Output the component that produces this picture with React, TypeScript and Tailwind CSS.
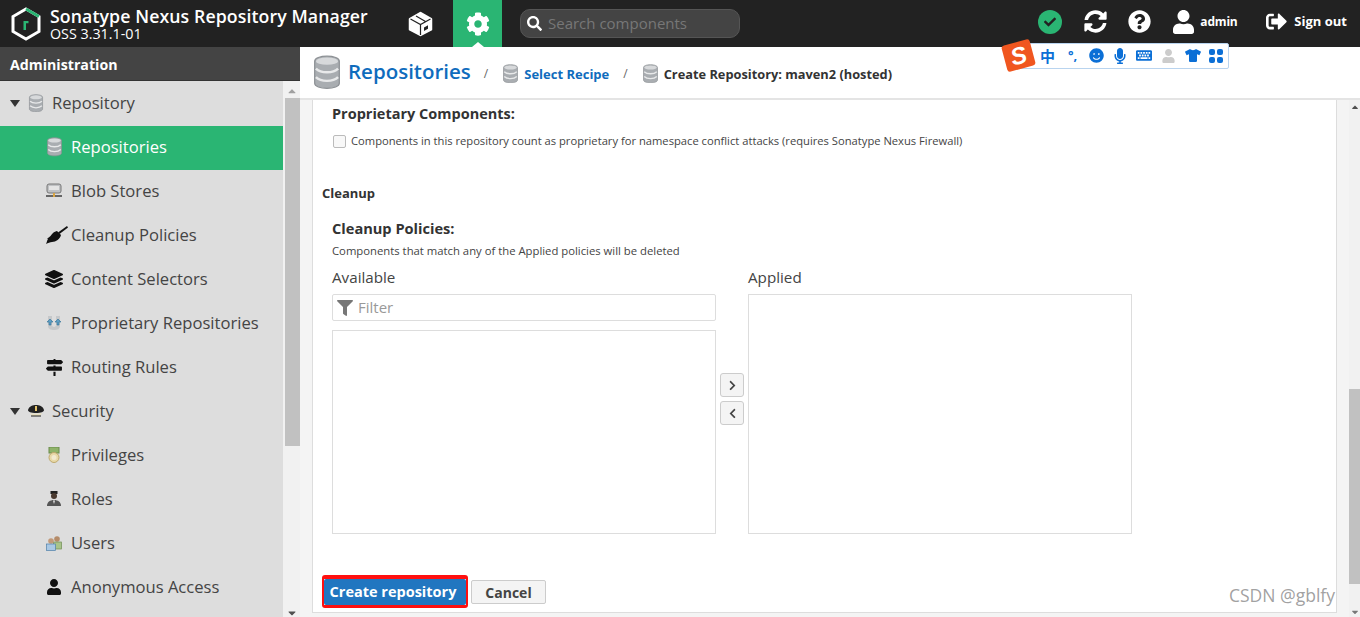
import React from "react";
import {
  FaCog, FaCheck, FaSyncAlt, FaQuestionCircle, FaUser, FaSignOutAlt, FaSearch, FaLayerGroup, FaFilter, FaChevronRight, FaChevronLeft, FaSmile, FaMicrophone, FaKeyboard, FaTshirt, FaMapSigns, FaCaretDown, FaCaretUp,
} from "react-icons/fa";

const Db = ({ s = 16 }: { s?: number }) => (
  <svg width={s} height={s * 1.15} viewBox="0 0 24 28" className="shrink-0">
    <path d="M2 5c0-2.5 4.500-4 10-4s10 1.500 10 4v18c0 2.500-4.500 4-10 4S2 25.500 2 23z" fill="#a9adb1" stroke="#8d9195" strokeWidth="1" />
    <ellipse cx="12" cy="5" rx="9" ry="3" fill="#d7d9db" />
    <path d="M3 11c2 2 5 3 9 3s7-1 9-3" fill="none" stroke="#e8e9ea" strokeWidth="2" />
    <path d="M3 18c2 2 5 3 9 3s7-1 9-3" fill="none" stroke="#e8e9ea" strokeWidth="2" />
  </svg>
);

const Logo = () => (
  <svg width="30" height="34" viewBox="0 0 30 34" className="shrink-0">
    <path d="M15 2 28 9.500v15L15 32 2 24.500v-15z" fill="none" stroke="#fff" strokeWidth="3" />
    <path d="M15 2 28 9.500" fill="none" stroke="#2ab573" strokeWidth="3" />
    <path d="M12.500 23v-9h5v2.200h-2.500V23z" fill="#2ab573" />
  </svg>
);

const Cube = () => (
  <svg width="25" height="26" viewBox="0 0 25 26" className="shrink-0">
    <path d="M12.500 2 23 8v10.500L12.500 24 2 18.500V8z" fill="#fff" stroke="#fff" strokeWidth="2.500" strokeLinejoin="round" />
    <path d="M2.500 8 12.500 13.500 22.500 8M12.500 13.500V24M8 5l9.500 5.500" fill="none" stroke="#222" strokeWidth="1.200" />
    <path d="M16 16.500l4-2.200v3.500l-4 2.200z" fill="#222" />
  </svg>
);

const Broom = () => (
  <svg width="23" height="20" viewBox="0 0 23 20" className="shrink-0 ml-[5px]"><path d="M22 1 13 7.500l1.500 1.500L23 2.500z" fill="#111" /><path d="M12 6l4 4c-1 4-5 7-9 7-2 0-4 1-6 2 1-2 1-4 2-5-1 0-1-1 0-1 2-1 3-3 5-5 1-1 3-2 4-2z" fill="#111" /></svg>
);
const Blob = () => (
  <svg width="16" height="16" viewBox="0 0 16 16" className="shrink-0"><rect x="1" y="1" width="14" height="9" rx="2" fill="#bfc1c3" stroke="#777" /><rect x="3" y="3" width="10" height="4" fill="#e4e4e4" /><rect x="0" y="12" width="16" height="2" fill="#666" /><rect x="7" y="10" width="2" height="4" fill="#d9a441" /></svg>
);
const Prop = () => (
  <svg width="16" height="16" viewBox="0 0 16 16" className="shrink-0"><path d="M2 1h4v9c0 1 1 2 2 2s2-1 2-2V1h4v10c0 3-3 4-6 4s-6-1-6-4z" fill="#c6c8ca" /><path d="M4 4 1 7h2v3h2V7h2zM12 4 9 7h2v3h2V7h2z" fill="#5f9fc4" stroke="#2f6f95" strokeWidth=".6" /></svg>
);
const Cap = () => (
  <svg width="16" height="12" viewBox="0 0 16 12" className="shrink-0"><path d="M0 5C1 1 5 0 8 0s7 1 8 5c0 2-3 3-8 3S0 7 0 5z" fill="#222" /><rect x="7" y="1" width="2" height="5" fill="#e3c36a" /><path d="M2 8c2 1 10 1 12 0l-2 3H4z" fill="#e7dfc0" /><path d="M3 11h10" stroke="#222" /></svg>
);
const Medal = () => (
  <svg width="12" height="16" viewBox="0 0 12 16" className="shrink-0"><rect x="1" y="0" width="10" height="6" fill="#8fb36a" stroke="#6b8c4a" /><circle cx="6" cy="10.500" r="5" fill="#e8d9a8" stroke="#bfa96d" /><circle cx="6" cy="10.500" r="2.500" fill="#f2ead0" /></svg>
);
const Role = () => (
  <svg width="14" height="16" viewBox="0 0 14 16" className="shrink-0"><rect x="3.500" y="0" width="7" height="3" fill="#222" /><circle cx="7" cy="5" r="3" fill="#4a3a30" /><path d="M0 15c0-4 3-6 7-6s7 2 7 6z" fill="#555" /><path d="M6 9.500h2L7 13z" fill="#eee" /></svg>
);
const Users = () => (
  <svg width="16" height="16" viewBox="0 0 16 16" className="shrink-0"><circle cx="11" cy="4" r="2.800" fill="#b58c6a" /><rect x="7.500" y="7" width="8" height="7" fill="#a8c48a" stroke="#6f8c55" strokeWidth=".7" /><circle cx="5" cy="6" r="2.800" fill="#c29a7a" /><rect x="0.500" y="9" width="9" height="6.500" fill="#a9c8e4" stroke="#4f7fa8" strokeWidth=".7" /></svg>
);

const Row = ({ icon, label, active, parent }: { icon: React.ReactNode; label: string; active?: boolean; parent?: boolean }) => (
  <div className={`h-11 flex items-center text-[16.600px] pb-[2px] ${active ? "bg-[#2ab573] text-white" : "text-[#444]"} ${parent ? "pl-[10px]" : "pl-[45px]"}`}>
    {parent && (
      <svg width="10" height="7" viewBox="0 0 10 7" className="mr-[8px] shrink-0"><path d="M0 0h10L5 7z" fill="#333" /></svg>
    )}
    <span className={`flex items-center justify-center ${parent ? "w-4 mr-[8px]" : "w-[18px] mr-2"}`}>{icon}</span>
    <span>{label}</span>
  </div>
);

export default function App() {
  return (
    <div className="relative w-[1360px] h-[617px] overflow-hidden bg-white flex flex-col font-['Open_Sans',sans-serif] text-[#333]">
      <header className="h-[47px] shrink-0 bg-[#222] flex items-center text-white">
        <div className="pl-[11px] flex items-center w-[397px]">
          <Logo />
          <div className="ml-[9px]">
            <div className="text-[17.700px] font-semibold leading-[18px] tracking-[0.1px] whitespace-nowrap">Sonatype Nexus Repository Manager</div>
            <div className="mt-[2px] text-[14.300px] leading-[14px]">OSS 3.31.1-01</div>
          </div>
        </div>
        <span className="ml-[11px]"><Cube /></span>
        <div className="relative ml-[20px] w-[49px] h-[47px] bg-[#2ab573] flex items-center justify-center">
          <FaCog className="w-6 h-6" />
          <div className="absolute bottom-0 left-[19px] w-0 h-0 border-x-[6px] border-x-transparent border-b-[5px] border-b-white" />
        </div>
        <div className="ml-[18px] w-[220px] h-[29px] rounded-[10px] bg-[#444] border border-[#555] flex items-center px-[6px] text-[15px] text-[#777]">
          <FaSearch className="w-[15px] h-[15px] text-white mr-[6px]" />
          Search components
        </div>
        <div className="ml-auto flex items-center pb-1">
          <div className="w-6 h-6 rounded-full bg-[#2ab573] flex items-center justify-center"><FaCheck className="w-3 h-3 text-[#222]" /></div>
          <FaSyncAlt className="w-[23px] h-[23px] ml-[22px]" />
          <FaQuestionCircle className="w-[23px] h-[23px] ml-[21px]" />
          <FaUser className="w-[23px] h-[24px] ml-[21px]" />
          <span className="ml-[5px] w-[39px] text-[12px] font-bold tracking-[-0.2px]">admin</span>
          <FaSignOutAlt className="w-[21px] h-[21px] ml-[27px]" />
          <span className="ml-[7px] mr-[13px] text-[13px] font-bold">Sign out</span>
        </div>
      </header>
      <div className="flex flex-1 min-h-0">
        <aside className="w-[300px] shrink-0 flex flex-col">
          <div className="h-[34px] shrink-0 bg-[#444] text-white text-[14.200px] font-bold flex items-center pl-[10px] pt-[2px] border-b border-[#333]">Administration</div>
          <div className="flex flex-1 min-h-0">
            <nav className="w-[283px] bg-[#ddd] overflow-hidden pt-px">
              <Row parent icon={<Db s={16} />} label="Repository" />
              <Row active icon={<Db s={17} />} label="Repositories" />
              <Row icon={<Blob />} label="Blob Stores" />
              <Row icon={<Broom />} label="Cleanup Policies" />
              <Row icon={<FaLayerGroup className="w-[18px] h-[18px] text-[#111]" />} label="Content Selectors" />
              <Row icon={<Prop />} label="Proprietary Repositories" />
              <Row icon={<FaMapSigns className="w-[17px] h-[17px] text-[#111]" />} label="Routing Rules" />
              <Row parent icon={<Cap />} label="Security" />
              <Row icon={<Medal />} label="Privileges" />
              <Row icon={<Role />} label="Roles" />
              <Row icon={<Users />} label="Users" />
              <Row icon={<FaUser className="w-4 h-4 text-[#111]" />} label="Anonymous Access" />
            </nav>
            <div className="w-[17px] bg-[#f1f1f1] flex flex-col items-center pl-px">
              <FaCaretUp className="w-3 h-3 text-[#a0a0a0] shrink-0 mt-[4px]" />
              <div className="w-[15px] h-[348px] bg-[#c1c1c1] mt-[1px]" />
              <div className="flex-1" />
              <FaCaretDown className="w-3 h-3 text-[#505050] shrink-0 -mb-[2px]" />
            </div>
          </div>
        </aside>
        <main className="flex-1 min-w-0 flex flex-col">
          <div className="h-[53px] shrink-0 border-b-2 border-[#e4e4e4] flex items-center pl-[12px] bg-white">
            <Db s={30} />
            <span className="ml-[6px] text-[20.500px] font-semibold text-[#0f6cbd] -mt-[3px]">Repositories</span>
            <span className="ml-[13px] mt-[2px] text-[#666] text-[12px]">/</span>
            <span className="ml-[14px] mt-[2px]"><Db s={17} /></span>
            <span className="ml-[5px] mt-[4px] text-[13px] font-bold text-[#0f6cbd]">Select Recipe</span>
            <span className="ml-[14px] mt-[2px] text-[#666] text-[12px]">/</span>
            <span className="ml-[14px] mt-[2px]"><Db s={17} /></span>
            <span className="ml-[5px] mt-[4px] text-[12.800px] font-bold text-[#333]">Create Repository: maven2 (hosted)</span>
          </div>
          <div className="flex flex-1 min-h-0 bg-[#f4f4f4]">
            <div className="ml-[12px] w-[1025px] h-[513px] bg-white border-x border-b border-[#ddd] flex flex-col pl-[9px] overflow-hidden">
              <section className="pl-[10px] pt-[4px]">
                <h3 className="text-[14.500px] font-bold leading-[20px] text-[#333]">Proprietary Components:</h3>
                <label className="mt-[7px] flex items-center text-[11.200px] leading-[20px] text-[#444]">
                  <span className="w-[13px] h-[13px] rounded-[2px] border border-[#bbb] bg-[#f8f8f8] mr-[5px] ml-px" />
                  Components in this repository count as proprietary for namespace conflict attacks (requires Sonatype Nexus Firewall)
                </label>
              </section>
              <h2 className="mt-[32px] text-[13px] font-bold leading-[20px] text-[#333]">Cleanup</h2>
              <section className="pl-[10px] mt-[15px]">
                <h3 className="text-[14.600px] font-bold leading-[20px] text-[#333]">Cleanup Policies:</h3>
                <p className="mt-[3px] text-[11.300px] leading-[20px] text-[#444]">Components that match any of the Applied policies will be deleted</p>
                <div className="flex mt-[6px]">
                  <div className="w-[384px] flex flex-col">
                    <div className="text-[15.200px] leading-[20px] text-[#444]">Available</div>
                    <div className="mt-[7px] h-[27px] rounded-[2px] border border-[#ddd] flex items-center pl-[4px] text-[15px] text-[#999]">
                      <FaFilter className="w-[16px] h-[16px] text-[#777] mr-[5px]" />Filter
                    </div>
                    <div className="mt-[9px] h-[204px] border border-[#ddd]" />
                  </div>
                  <div className="w-[32px] flex flex-col items-center pt-[106px] gap-1">
                    <button className="w-6 h-6 rounded-[3px] border border-[#ccc] bg-[#f4f4f4] flex items-center justify-center"><FaChevronRight className="w-[11px] h-[11px] text-[#444]" /></button>
                    <button className="w-6 h-6 rounded-[3px] border border-[#ccc] bg-[#f4f4f4] flex items-center justify-center"><FaChevronLeft className="w-[11px] h-[11px] text-[#444]" /></button>
                  </div>
                  <div className="w-[384px] flex flex-col">
                    <div className="text-[15.200px] leading-[20px] text-[#444]">Applied</div>
                    <div className="mt-[7px] h-[240px] border border-[#ddd]" />
                  </div>
                </div>
              </section>
              <div className="mt-[41px] flex items-center">
                <div className="border-[2px] border-t-[4px] border-b-[3px] border-[#ff1010] rounded-[3px]">
                  <button className="w-[142px] h-[26px] pr-[4px] bg-[#2176c0] rounded-[2px] text-white text-[14.500px] font-bold">Create repository</button>
                </div>
                <button className="ml-[3px] mt-px w-[75px] h-[24px] bg-[#f4f4f4] border border-[#ccc] rounded-[2px] text-[14px] font-bold text-[#444]">Cancel</button>
              </div>
            </div>
            <div className="ml-auto w-[11px] flex flex-col items-center bg-[#f1f1f1] pr-0">
              <FaCaretUp className="w-[10px] h-[10px] text-[#505050] shrink-0 mt-[2px]" />
              <div className="flex-1 max-h-[277px]" />
              <div className="w-[11px] h-[195px] bg-[#c1c1c1]" />
              <FaCaretDown className="w-[10px] h-[10px] text-[#777] shrink-0 mt-auto" />
            </div>
          </div>
        </main>
      </div>

      <div className="absolute left-[1004px] top-[42px] flex items-center">
        <div className="absolute left-[9px] top-[1px] w-[216px] h-[26px] bg-white border border-[#b9d4ef] rounded-[2px]" />
        <div className="relative w-[29px] h-[27px] bg-[#f0561f] rounded-[3px] -rotate-[15deg] flex items-center justify-center text-white font-bold italic text-[24px] leading-none font-['Liberation_Sans',sans-serif]">S</div>
        <div className="relative flex items-center text-[#0b6fd6] ml-[7px]">
          <span className="text-[15px] font-bold leading-none font-['Noto_Sans_CJK_SC',sans-serif]">中</span>
          <span className="ml-[13px] text-[13px] font-bold leading-none w-[14px]">°,</span>
          <FaSmile className="ml-[7px] w-[15px] h-[15px]" />
          <FaMicrophone className="ml-[9px] w-[14px] h-[16px]" />
          <FaKeyboard className="ml-[9px] w-[16px] h-[15px]" />
          <FaUser className="ml-[10px] w-[13px] h-[14px] text-[#ccc]" />
          <FaTshirt className="ml-[10px] w-[16px] h-[15px]" />
          <svg className="ml-[8px]" width="14" height="14" viewBox="0 0 14 14" fill="#0b6fd6"><rect width="6" height="6" rx="2" /><rect x="8" width="6" height="6" rx="2" /><rect y="8" width="6" height="6" rx="2" /><rect x="8" y="8" width="6" height="6" rx="2" /></svg>
        </div>
      </div>
      <div className="absolute left-[1229px] top-[583px] text-[17.500px] leading-[24px] text-[#888]/80 font-['Open_Sans',sans-serif]">CSDN @gblfy</div>
    </div>
  );
}
